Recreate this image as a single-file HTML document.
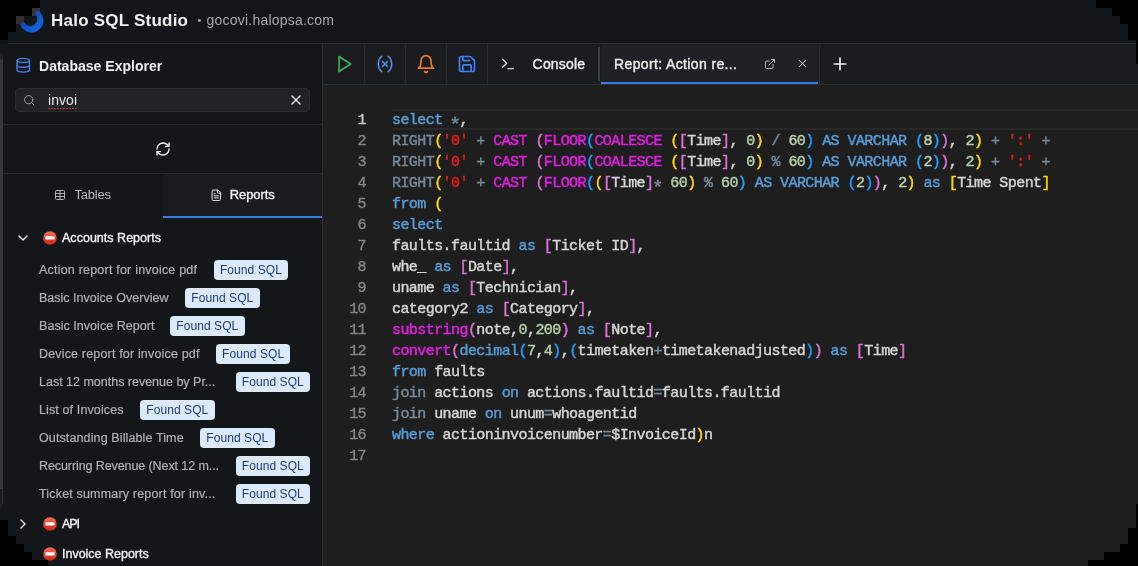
<!DOCTYPE html>
<html>
<head>
<meta charset="utf-8">
<title>Halo SQL Studio</title>
<style>
*{box-sizing:border-box;margin:0;padding:0}
html,body{width:1138px;height:566px;overflow:hidden;background:#000}
body{font-family:"Liberation Sans",sans-serif;position:relative;color:#e8e8e8}
.abs{position:absolute}
#app{position:absolute;left:0;top:0;width:1138px;height:566px;background:#131619;overflow:hidden;will-change:transform}
#hdr{position:absolute;left:0;top:0;width:1138px;height:43px;background:#12161a}
#hdrline{position:absolute;left:0;top:43px;width:1138px;height:1px;background:#2a2d31}
#title{position:absolute;left:51px;top:11px;font-size:17px;font-weight:bold;line-height:20px;color:#f0f0f0;white-space:nowrap;letter-spacing:0.228px}
#bullet{position:absolute;left:197.5px;top:11px;font-size:11px;line-height:18px;color:#a3a7ab}
#sub{position:absolute;left:206.5px;top:11px;font-size:14px;line-height:18px;color:#a3a7ab;white-space:nowrap;letter-spacing:0.221px}
#side{position:absolute;left:0;top:44px;width:322px;height:522px;background:#14171a}
#sideborder{position:absolute;left:322px;top:44px;width:2px;height:522px;background:linear-gradient(90deg,#2a2d31 0,#2a2d31 50%,#232629 50%)}
#sidetab{position:absolute;left:163px;top:174px;width:159px;height:42px;background:#181b1f}
#edge{position:absolute;left:0;top:60px;width:3px;height:429px;background:#36393b}
#edge2{position:absolute;left:2px;top:489px;width:1px;height:15px;background:#34373a}
#edge3{position:absolute;left:0;top:489px;width:2px;height:20px;background:#1a1c1e}
#edge4{position:absolute;left:0;top:52px;width:3px;height:8px;background:linear-gradient(180deg,#151617,#2c2f31)}
.hline{position:absolute;left:3px;width:319px;height:1px;background:#25282c}
#dbtitle{position:absolute;left:39px;top:57px;font-size:14px;font-weight:bold;line-height:18px;color:#f0f0f0;white-space:nowrap;letter-spacing:0.015px}
#search{position:absolute;left:15px;top:88px;width:295px;height:24px;border-radius:4px;background:#1f2226;border:1px solid #272a2e}
#stext{position:absolute;left:48px;top:91px;font-size:14px;line-height:18px;color:#e6e6e6;letter-spacing:0.051px}
#sdots{position:absolute;left:48px;top:107.5px;width:29px;height:1.5px;background:repeating-linear-gradient(90deg,#d02828 0,#d02828 1.6px,transparent 1.6px,transparent 3px)}
.tab{position:absolute;top:186px;font-size:13px;line-height:18px;white-space:nowrap}
#tabline{position:absolute;left:163px;top:216px;width:159px;height:2px;background:#3a7de0}
.grp{position:absolute;left:62px;font-size:12.5px;line-height:18px;color:#f2f2f2;white-space:nowrap;-webkit-text-stroke:0.35px #f2f2f2}
.it{position:absolute;left:39px;font-size:12.5px;line-height:18px;color:#aeb2b6;white-space:nowrap;-webkit-text-stroke:0.2px #aeb2b6}
.bd{position:absolute;width:74.7px;height:20px;border-radius:4px;background:#dbeafe;color:#1e3a8a;font-size:12px;line-height:20px;text-align:center;white-space:nowrap;letter-spacing:0.078px}
.emo{position:absolute;width:14px;height:14px}
#tb{position:absolute;left:323px;top:44px;width:815px;height:40px;background:#1a1c1f}
#tbline{position:absolute;left:323px;top:84px;width:815px;height:1px;background:#2a2d31}
.vsep{position:absolute;top:44px;width:1px;height:40px;background:#26292d}
#acttab{position:absolute;left:601px;top:44px;width:217px;height:38px;background:#1e2125}
#actline{position:absolute;left:601px;top:82px;width:217px;height:2px;background:#3a7de0}
.tabtxt{position:absolute;top:55px;font-size:14px;line-height:18px;color:#ececec;white-space:nowrap;-webkit-text-stroke:0.4px #ececec}
#ed{position:absolute;left:323px;top:85px;width:815px;height:481px;background:#1e1e1e}
#curline{position:absolute;left:392px;top:109px;width:746px;height:21px;border-top:2px solid #282828;border-bottom:2px solid #282828}
.ln{position:absolute;left:330px;width:36px;text-align:right;font-family:"Liberation Mono",monospace;font-size:15px;line-height:21px;color:#858585;letter-spacing:-0.57px;-webkit-text-stroke:0.4px}
.cl{position:absolute;left:392px;font-family:"Liberation Mono",monospace;font-size:15px;line-height:21px;color:#d4d4d4;white-space:pre;letter-spacing:-0.57px;-webkit-text-stroke:0.45px}
.k{color:#569cd6}.p{color:#e41ce4}.s{color:#e81a1a}.o{color:#778899}.n{color:#b5cea8}
.b1{color:#ffd700}.b2{color:#da70d6}.b3{color:#179fff}
.ast{display:inline-block;width:8.43px;letter-spacing:0;font-size:19px;line-height:10px;text-align:center;position:relative;top:5.5px;left:-1.6px;-webkit-text-stroke:0.5px}
.blk{position:absolute;background:#000}
</style>
</head>
<body>
<div id="app">
<div id="hdr"></div><div id="hdrline"></div>
<div class="blk" style="left:32px;top:8px;width:8px;height:8px;background:#353337"></div><div class="blk" style="left:16px;top:16px;width:8px;height:8px;background:#323034"></div><div class="blk" style="left:16px;top:24px;width:8px;height:8px;background:#18181c"></div><div class="blk" style="left:0;top:40px;width:8px;height:16px;background:#111213"></div>
<svg class="abs" style="left:0;top:0" width="56" height="44" viewBox="0 0 56 44"><defs><linearGradient id="eg" x1="0" y1="0" x2="0" y2="1"><stop offset="0" stop-color="#f87058"/><stop offset="0.5" stop-color="#e8452e"/><stop offset="1" stop-color="#c8281a"/></linearGradient><linearGradient id="lg" gradientUnits="userSpaceOnUse" x1="22" y1="12" x2="42" y2="32"><stop offset="0" stop-color="#0b3d93"/><stop offset="0.55" stop-color="#1259cf"/><stop offset="1" stop-color="#1668e3"/></linearGradient></defs><path d="M37.7 10.8 A11.6 11.6 0 1 1 20.5 24.5 L23.8 22.5 A7.4 7.4 0 1 0 35.4 13.6 Z" fill="url(#lg)" stroke="url(#lg)" stroke-width="0.8" stroke-linejoin="round"/></svg>
<div id="title">Halo SQL Studio</div>
<div id="bullet">•</div><div id="sub">gocovi.halopsa.com</div>
<div id="side"></div><div id="sideborder"></div><div id="edge"></div><div id="edge2"></div><div id="edge3"></div><div id="edge4"></div>
<div id="dbtitle">Database Explorer</div>
<div id="search"></div><div id="stext">invoi</div><div id="sdots"></div>
<div id="sidetab"></div><div class="hline" style="top:124px"></div><div class="hline" style="top:173px"></div>
<div class="tab" style="left:74.5px;color:#b4b8bc;letter-spacing:-0.216px">Tables</div>
<div class="tab" style="left:229.7px;color:#f2f2f2;-webkit-text-stroke:0.35px #f2f2f2;letter-spacing:-0.072px">Reports</div>
<div id="tabline"></div>
<svg class="abs" style="left:14.75px;top:57.25px" width="16.5" height="16.5" viewBox="0 0 24 24" fill="none" stroke="#3b82f6" stroke-width="2" stroke-linecap="round" stroke-linejoin="round"><ellipse cx="12" cy="5" rx="9" ry="3"/><path d="M3 5V19A9 3 0 0 0 21 19V5"/><path d="M3 12A9 3 0 0 0 21 12"/></svg>
<svg class="abs" style="left:22.8px;top:94.1px" width="12.4" height="12.4" viewBox="0 0 24 24" fill="none" stroke="#a4a8ac" stroke-width="1.8" stroke-linecap="round" stroke-linejoin="round"><circle cx="11" cy="11" r="8"/><path d="m21 21-4.3-4.3"/></svg>
<svg class="abs" style="left:288px;top:92px" width="16" height="16" viewBox="0 0 24 24" fill="none" stroke="#f0f0f0" stroke-width="2" stroke-linecap="round" stroke-linejoin="round"><path d="M18 6 6 18"/><path d="m6 6 12 12"/></svg>
<svg class="abs" style="left:155px;top:141px" width="16" height="16" viewBox="0 0 24 24" fill="none" stroke="#f0f0f0" stroke-width="2" stroke-linecap="round" stroke-linejoin="round"><path d="M3 12a9 9 0 0 1 9-9 9.75 9.75 0 0 1 6.74 2.74L21 8"/><path d="M21 3v5h-5"/><path d="M21 12a9 9 0 0 1-9 9 9.75 9.75 0 0 1-6.74-2.74L3 16"/><path d="M8 16H3v5"/></svg>
<svg class="abs" style="left:54px;top:189px" width="12" height="12" viewBox="0 0 24 24" fill="none" stroke="#b4b8bc" stroke-width="1.9" stroke-linecap="round" stroke-linejoin="round"><path d="M12 3v18"/><rect width="18" height="18" x="3" y="3" rx="2"/><path d="M3 9h18"/><path d="M3 15h18"/></svg>
<svg class="abs" style="left:209.75px;top:188.75px" width="12.5" height="12.5" viewBox="0 0 24 24" fill="none" stroke="#e8e8e8" stroke-width="1.9" stroke-linecap="round" stroke-linejoin="round"><path d="M15 2H6a2 2 0 0 0-2 2v16a2 2 0 0 0 2 2h12a2 2 0 0 0 2-2V7Z"/><path d="M14 2v4a2 2 0 0 0 2 2h4"/><path d="M10 9H8"/><path d="M16 13H8"/><path d="M16 17H8"/></svg>
<svg class="abs" style="left:15px;top:230px" width="16" height="16" viewBox="0 0 24 24" fill="none" stroke="#f0f0f0" stroke-width="2" stroke-linecap="round" stroke-linejoin="round"><path d="m6 9 6 6 6-6"/></svg>
<svg class="emo" style="left:43px;top:231px" viewBox="0 0 14 14"><circle cx="7" cy="7" r="6.8" fill="url(#eg)"/><rect x="2.4" y="5.3" width="9.2" height="3.3" rx="0.7" fill="#fff"/></svg>
<div class="grp" style="top:229px;letter-spacing:0.022px">Accounts Reports</div>
<div class="it" style="top:261px;letter-spacing:0.208px">Action report for invoice pdf</div>
<div class="bd" style="left:213.6px;top:260px">Found SQL</div>
<div class="it" style="top:289px;letter-spacing:0.013px">Basic Invoice Overview</div>
<div class="bd" style="left:185px;top:288px">Found SQL</div>
<div class="it" style="top:317px;letter-spacing:0.045px">Basic Invoice Report</div>
<div class="bd" style="left:170px;top:316px">Found SQL</div>
<div class="it" style="top:345px;letter-spacing:0.17px">Device report for invoice pdf</div>
<div class="bd" style="left:215.8px;top:344px">Found SQL</div>
<div class="it" style="top:373px;letter-spacing:-0.007px">Last 12 months revenue by Pr...</div>
<div class="bd" style="left:235.5px;top:372px">Found SQL</div>
<div class="it" style="top:401px;letter-spacing:0.121px">List of Invoices</div>
<div class="bd" style="left:140px;top:400px">Found SQL</div>
<div class="it" style="top:429px;letter-spacing:0.119px">Outstanding Billable Time</div>
<div class="bd" style="left:200px;top:428px">Found SQL</div>
<div class="it" style="top:457px;letter-spacing:-0.091px">Recurring Revenue (Next 12 m...</div>
<div class="bd" style="left:235.5px;top:456px">Found SQL</div>
<div class="it" style="top:485px;letter-spacing:0.175px">Ticket summary report for inv...</div>
<div class="bd" style="left:235.5px;top:484px">Found SQL</div>
<svg class="abs" style="left:15px;top:516px" width="16" height="16" viewBox="0 0 24 24" fill="none" stroke="#f0f0f0" stroke-width="2" stroke-linecap="round" stroke-linejoin="round"><path d="m9 18 6-6-6-6"/></svg>
<svg class="emo" style="left:43px;top:517px" viewBox="0 0 14 14"><circle cx="7" cy="7" r="6.8" fill="url(#eg)"/><rect x="2.4" y="5.3" width="9.2" height="3.3" rx="0.7" fill="#fff"/></svg>
<div class="grp" style="top:515px;letter-spacing:-1.078px">API</div>
<svg class="emo" style="left:43px;top:547px" viewBox="0 0 14 14"><circle cx="7" cy="7" r="6.8" fill="url(#eg)"/><rect x="2.4" y="5.3" width="9.2" height="3.3" rx="0.7" fill="#fff"/></svg>
<div class="grp" style="top:545px;letter-spacing:-0.011px">Invoice Reports</div>
<div id="tb"></div><div id="tbline"></div>
<div class="vsep" style="left:364px"></div>
<div class="vsep" style="left:405px"></div>
<div class="vsep" style="left:446px"></div>
<div class="vsep" style="left:487px"></div>
<svg class="abs" style="left:334px;top:54px" width="20" height="20" viewBox="0 0 24 24" fill="none" stroke="#2fb35a" stroke-width="2" stroke-linecap="round" stroke-linejoin="round"><polygon points="6 3 20 12 6 21 6 3"/></svg>
<svg class="abs" style="left:375px;top:54px" width="20" height="20" viewBox="0 0 24 24" fill="none" stroke="#4f8aea" stroke-width="2" stroke-linecap="round" stroke-linejoin="round"><path d="M8 21s-4-3-4-9 4-9 4-9"/><path d="M16 3s4 3 4 9-4 9-4 9"/><line x1="15" x2="9" y1="9" y2="15"/><line x1="9" x2="15" y1="9" y2="15"/></svg>
<svg class="abs" style="left:416px;top:53.7px" width="20" height="20" viewBox="0 0 24 24" fill="none" stroke="#f07a28" stroke-width="2" stroke-linecap="round" stroke-linejoin="round"><path d="M6 8a6 6 0 0 1 12 0c0 7 3 9 3 9H3s3-2 3-9"/><path d="M10.3 21a1.94 1.94 0 0 0 3.4 0"/></svg>
<svg class="abs" style="left:457px;top:54px" width="20" height="20" viewBox="0 0 24 24" fill="none" stroke="#3b82f6" stroke-width="2" stroke-linecap="round" stroke-linejoin="round"><path d="M15.2 3a2 2 0 0 1 1.4.6l3.8 3.8a2 2 0 0 1 .6 1.4V19a2 2 0 0 1-2 2H5a2 2 0 0 1-2-2V5a2 2 0 0 1 2-2z"/><path d="M17 21v-7a1 1 0 0 0-1-1H8a1 1 0 0 0-1 1v7"/><path d="M7 3v4a1 1 0 0 0 1 1h7"/></svg>
<svg class="abs" style="left:500px;top:56px" width="16" height="16" viewBox="0 0 24 24" fill="none" stroke="#d8d8d8" stroke-width="2" stroke-linecap="round" stroke-linejoin="round"><polyline points="4 17 10 11 4 5"/><line x1="12" x2="20" y1="19" y2="19"/></svg>
<div class="tabtxt" style="left:532.6px;letter-spacing:0.171px">Console</div>
<div class="abs" style="left:598px;top:47px;width:2px;height:34px;background:#3a3d41"></div>
<div id="acttab"></div><div id="actline"></div>
<div class="tabtxt" style="left:614px;letter-spacing:0.371px">Report: Action re...</div>
<svg class="abs" style="left:764px;top:58px" width="12" height="12" viewBox="0 0 24 24" fill="none" stroke="#b8bcc0" stroke-width="1.9" stroke-linecap="round" stroke-linejoin="round"><path d="M15 3h6v6"/><path d="M10 14 21 3"/><path d="M18 13v6a2 2 0 0 1-2 2H5a2 2 0 0 1-2-2V8a2 2 0 0 1 2-2h6"/></svg>
<svg class="abs" style="left:795.5px;top:57px" width="13" height="13" viewBox="0 0 24 24" fill="none" stroke="#c8ccd0" stroke-width="1.9" stroke-linecap="round" stroke-linejoin="round"><path d="M18 6 6 18"/><path d="m6 6 12 12"/></svg>
<div class="vsep" style="left:819px"></div>
<svg class="abs" style="left:830px;top:54px" width="20" height="20" viewBox="0 0 24 24" fill="none" stroke="#f0f0f0" stroke-width="2" stroke-linecap="round" stroke-linejoin="round"><path d="M5 12h14"/><path d="M12 5v14"/></svg>
<div id="ed"></div><div id="curline"></div>
<div class="ln" style="top:110px;color:#c6c6c6">1</div><div class="cl" style="top:110px"><span class="k">select</span> <span class="o"><span class="ast">*</span></span>,</div>
<div class="ln" style="top:131px">2</div><div class="cl" style="top:131px"><span class="o">RIGHT</span><span class="b1">(</span><span class="s">'0'</span> <span class="o">+</span> <span class="p">CAST</span> <span class="b2">(</span><span class="p">FLOOR</span><span class="b3">(</span><span class="p">COALESCE</span> <span class="b1">(</span><span class="b2">[</span>Time<span class="b2">]</span>, <span class="n">0</span><span class="b1">)</span> <span class="o">/</span> <span class="n">60</span><span class="b3">)</span> <span class="k">AS</span> <span class="k">VARCHAR</span> <span class="b3">(</span><span class="n">8</span><span class="b3">)</span><span class="b2">)</span>, <span class="n">2</span><span class="b1">)</span> <span class="o">+</span> <span class="s">':'</span> <span class="o">+</span></div>
<div class="ln" style="top:152px">3</div><div class="cl" style="top:152px"><span class="o">RIGHT</span><span class="b1">(</span><span class="s">'0'</span> <span class="o">+</span> <span class="p">CAST</span> <span class="b2">(</span><span class="p">FLOOR</span><span class="b3">(</span><span class="p">COALESCE</span> <span class="b1">(</span><span class="b2">[</span>Time<span class="b2">]</span>, <span class="n">0</span><span class="b1">)</span> <span class="o">%</span> <span class="n">60</span><span class="b3">)</span> <span class="k">AS</span> <span class="k">VARCHAR</span> <span class="b3">(</span><span class="n">2</span><span class="b3">)</span><span class="b2">)</span>, <span class="n">2</span><span class="b1">)</span> <span class="o">+</span> <span class="s">':'</span> <span class="o">+</span></div>
<div class="ln" style="top:173px">4</div><div class="cl" style="top:173px"><span class="o">RIGHT</span><span class="b1">(</span><span class="s">'0'</span> <span class="o">+</span> <span class="p">CAST</span> <span class="b2">(</span><span class="p">FLOOR</span><span class="b3">(</span><span class="b1">(</span><span class="b2">[</span>Time<span class="b2">]</span><span class="o"><span class="ast">*</span></span> <span class="n">60</span><span class="b1">)</span> <span class="o">%</span> <span class="n">60</span><span class="b3">)</span> <span class="k">AS</span> <span class="k">VARCHAR</span> <span class="b3">(</span><span class="n">2</span><span class="b3">)</span><span class="b2">)</span>, <span class="n">2</span><span class="b1">)</span> <span class="k">as</span> <span class="b1">[</span>Time Spent<span class="b1">]</span></div>
<div class="ln" style="top:194px">5</div><div class="cl" style="top:194px"><span class="k">from</span> <span class="b1">(</span></div>
<div class="ln" style="top:215px">6</div><div class="cl" style="top:215px"><span class="k">select</span></div>
<div class="ln" style="top:236px">7</div><div class="cl" style="top:236px">faults.faultid <span class="k">as</span> <span class="b2">[</span>Ticket ID<span class="b2">]</span>,</div>
<div class="ln" style="top:257px">8</div><div class="cl" style="top:257px">whe_ <span class="k">as</span> <span class="b2">[</span>Date<span class="b2">]</span>,</div>
<div class="ln" style="top:278px">9</div><div class="cl" style="top:278px">uname <span class="k">as</span> <span class="b2">[</span>Technician<span class="b2">]</span>,</div>
<div class="ln" style="top:299px">10</div><div class="cl" style="top:299px">category2 <span class="k">as</span> <span class="b2">[</span>Category<span class="b2">]</span>,</div>
<div class="ln" style="top:320px">11</div><div class="cl" style="top:320px"><span class="p">substring</span><span class="b2">(</span>note,<span class="n">0</span>,<span class="n">200</span><span class="b2">)</span> <span class="k">as</span> <span class="b2">[</span>Note<span class="b2">]</span>,</div>
<div class="ln" style="top:341px">12</div><div class="cl" style="top:341px"><span class="p">convert</span><span class="b2">(</span><span class="k">decimal</span><span class="b3">(</span><span class="n">7</span>,<span class="n">4</span><span class="b3">)</span>,<span class="b3">(</span>timetaken<span class="o">+</span>timetakenadjusted<span class="b3">)</span><span class="b2">)</span> <span class="k">as</span> <span class="b2">[</span>Time<span class="b2">]</span></div>
<div class="ln" style="top:362px">13</div><div class="cl" style="top:362px"><span class="k">from</span> faults</div>
<div class="ln" style="top:383px">14</div><div class="cl" style="top:383px"><span class="o">join</span> actions <span class="k">on</span> actions.faultid<span class="o">=</span>faults.faultid</div>
<div class="ln" style="top:404px">15</div><div class="cl" style="top:404px"><span class="o">join</span> uname <span class="k">on</span> unum<span class="o">=</span>whoagentid</div>
<div class="ln" style="top:425px">16</div><div class="cl" style="top:425px"><span class="k">where</span> actioninvoicenumber<span class="o">=</span>$InvoiceId<span class="b1">)</span>n</div>
<div class="ln" style="top:446px">17</div><div class="cl" style="top:446px"></div>
<div class="blk" style="left:0px;top:0px;width:40px;height:8px;background:#000"></div>
<div class="blk" style="left:0px;top:8px;width:32px;height:8px;background:#000"></div>
<div class="blk" style="left:0px;top:16px;width:16px;height:16px;background:#000"></div>
<div class="blk" style="left:0px;top:32px;width:8px;height:8px;background:#000"></div>
<div class="blk" style="left:1096px;top:0px;width:42px;height:8px;background:#000"></div>
<div class="blk" style="left:1112px;top:8px;width:26px;height:8px;background:#000"></div>
<div class="blk" style="left:1120px;top:16px;width:18px;height:8px;background:#000"></div>
<div class="blk" style="left:1128px;top:24px;width:10px;height:16px;background:#000"></div>
<div class="blk" style="left:1136px;top:40px;width:2px;height:24px;background:#000"></div>
<div class="blk" style="left:0px;top:520px;width:8px;height:46px;background:#000"></div>
<div class="blk" style="left:8px;top:536px;width:8px;height:30px;background:#000"></div>
<div class="blk" style="left:16px;top:544px;width:8px;height:22px;background:#000"></div>
<div class="blk" style="left:24px;top:552px;width:8px;height:14px;background:#000"></div>
<div class="blk" style="left:32px;top:560px;width:16px;height:6px;background:#000"></div>
<div class="blk" style="left:1136px;top:504px;width:2px;height:24px;background:#000"></div>
<div class="blk" style="left:1128px;top:528px;width:10px;height:38px;background:#000"></div>
<div class="blk" style="left:1120px;top:544px;width:8px;height:22px;background:#000"></div>
<div class="blk" style="left:1104px;top:552px;width:16px;height:14px;background:#000"></div>
<div class="blk" style="left:1088px;top:560px;width:16px;height:6px;background:#000"></div>
</div>
</body>
</html>
